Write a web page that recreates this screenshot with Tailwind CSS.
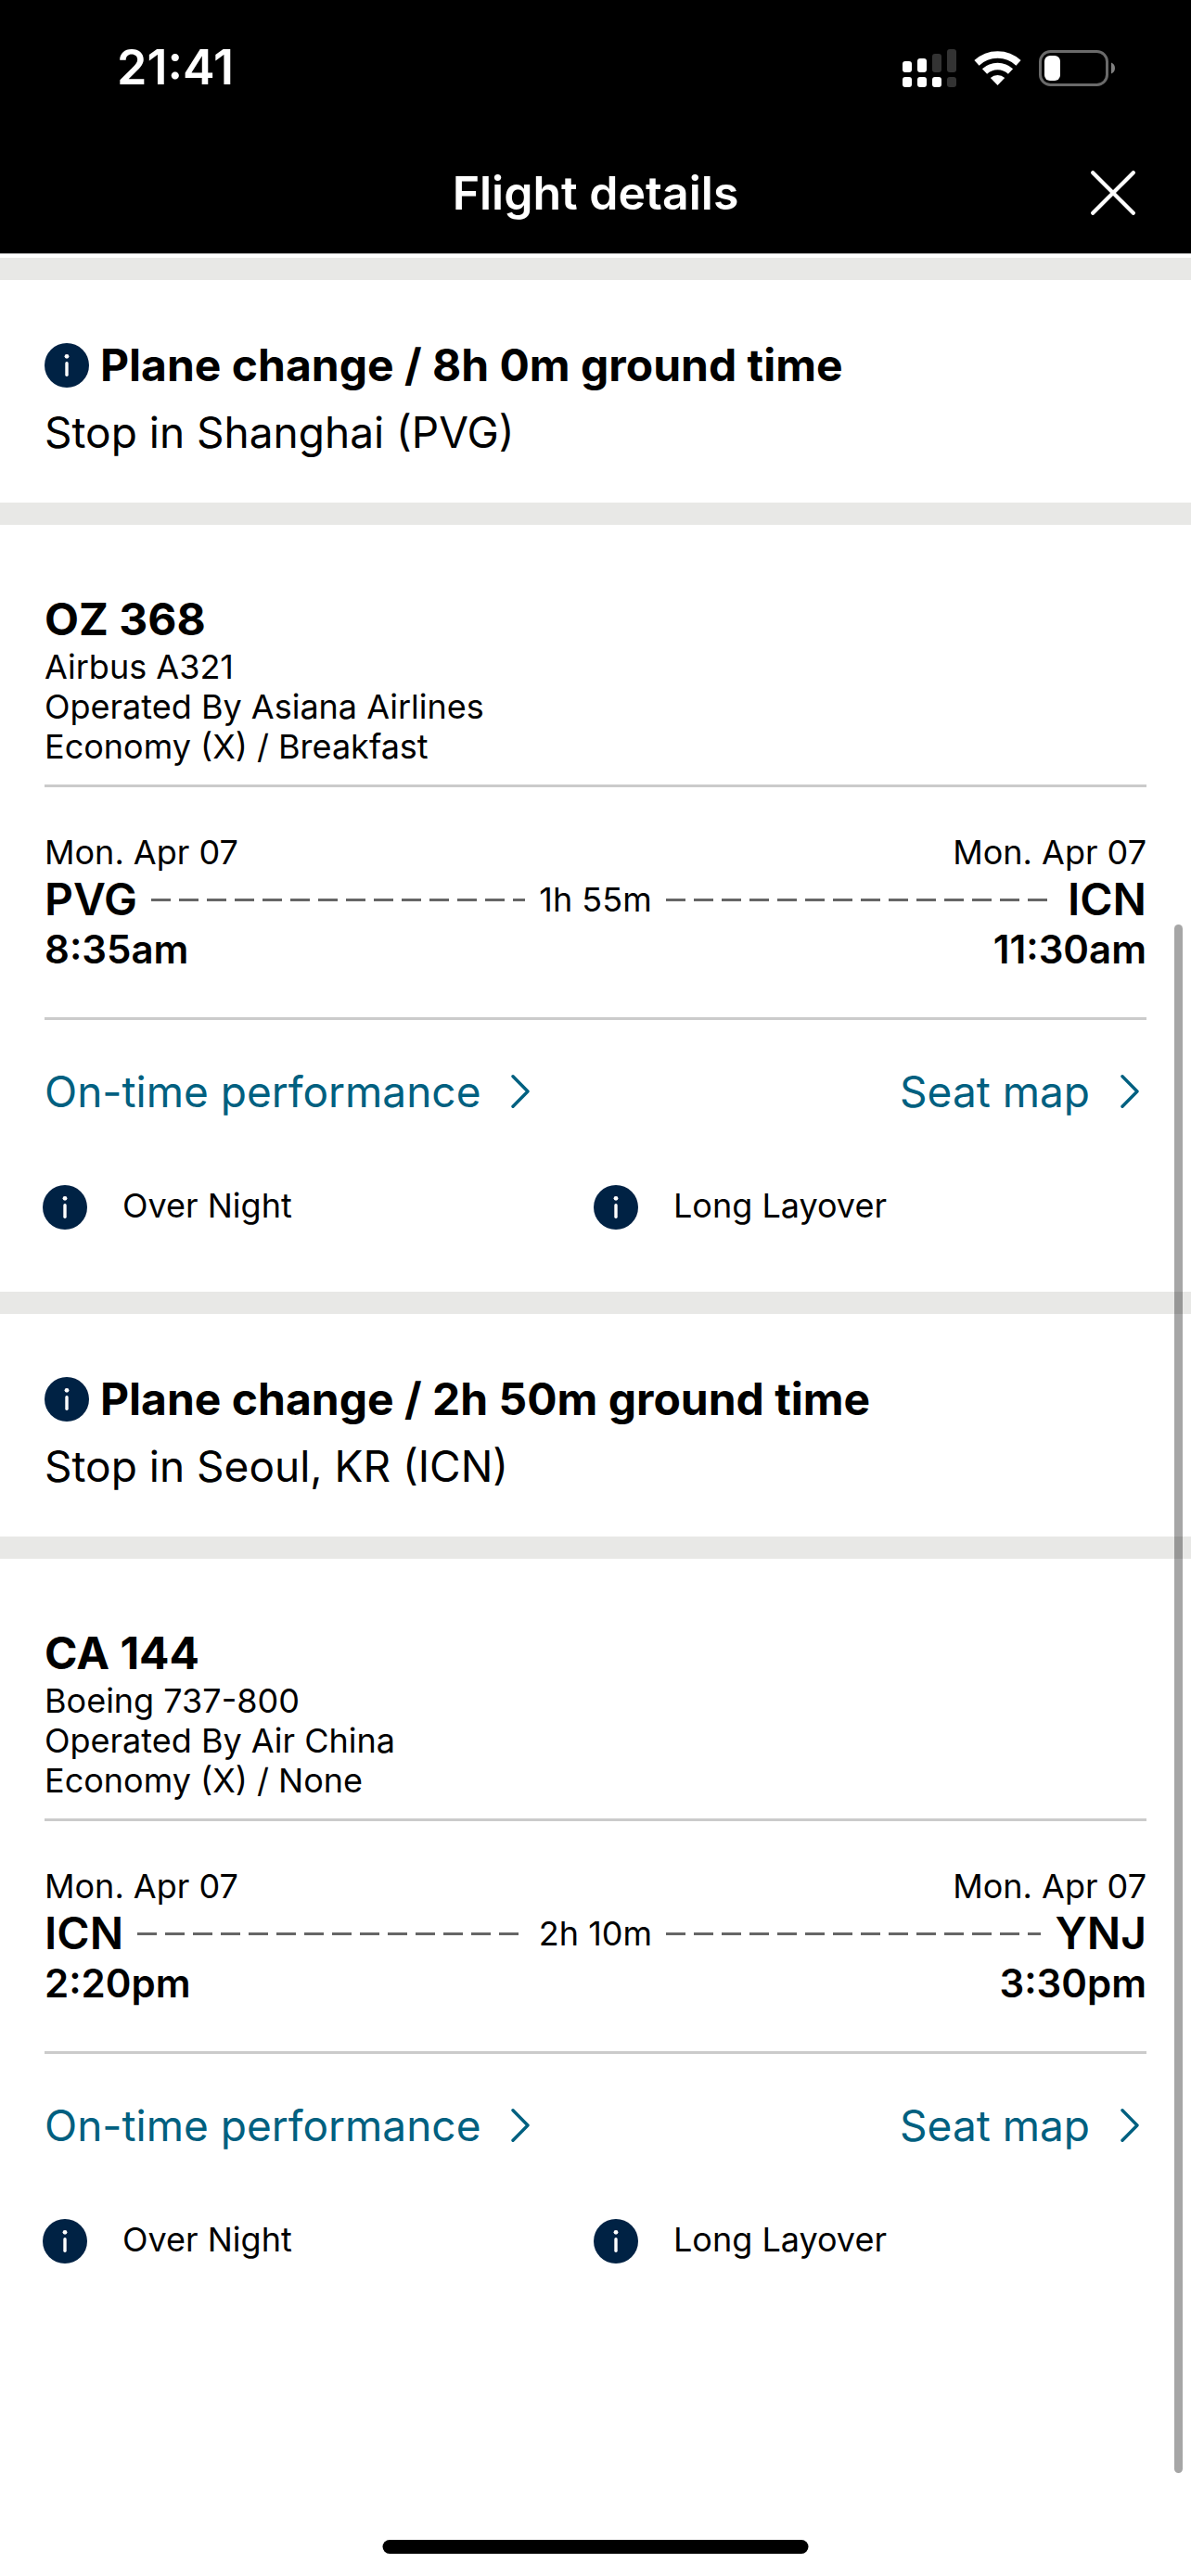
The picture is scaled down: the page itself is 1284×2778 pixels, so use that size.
<!DOCTYPE html>
<html lang="en">
<head>
<meta charset="utf-8">
<meta name="viewport" content="width=device-width, initial-scale=1">
<title>Flight details</title>
<script src="https://cdn.jsdelivr.net/npm/@tailwindcss/browser@4"></script>
</head>
<body class="relative min-h-screen bg-white font-['Inter',sans-serif] text-black">

<svg class="hidden" aria-hidden="true">
  <symbol id="info" viewBox="0 0 48 48">
    <circle cx="24" cy="24" r="24" fill="#002244"/>
    <circle cx="24" cy="14.3" r="2.4" fill="#fff"/>
    <path d="M24 21.7V34.3" stroke="#fff" stroke-width="3.4" stroke-linecap="round"/>
  </symbol>
  <symbol id="chevron" viewBox="0 0 28 36">
    <path d="M2 1.8 18 18 2 34.2" fill="none" stroke="currentColor" stroke-width="3.4" stroke-linecap="round" stroke-linejoin="round"/>
  </symbol>
</svg>

<header class="border-b border-[#a9a9a9] bg-black pb-[3px] text-white">
  <div class="flex h-[146px] items-center justify-between pr-[81px] pl-[126px]">
    <span class="text-[52px] font-semibold">21:41</span>
    <svg class="h-11 w-[230px]" viewBox="973 50 230 44" role="img" aria-label="Signal, Wi-Fi and battery">
      <g fill="#fff">
        <rect x="973" y="65" width="10" height="12" rx="3"/>
        <rect x="989" y="62" width="10" height="15" rx="3"/>
        <rect x="973" y="82" width="10" height="11" rx="3"/>
        <rect x="989" y="82" width="10" height="11" rx="3"/>
        <rect x="1005" y="82" width="10" height="11" rx="3"/>
      </g>
      <g fill="#333">
        <rect x="1005" y="57" width="10" height="20" rx="3"/>
        <rect x="1021" y="52" width="10" height="25" rx="3"/>
        <rect x="1021" y="82" width="10" height="11" rx="3"/>
      </g>
      <g fill="none" stroke="#fff" stroke-width="7.6">
        <path d="M1053 66.9A33 33 0 0 1 1098 66.9"/>
        <path d="M1061.5 76A20.5 20.5 0 0 1 1089.5 76"/>
      </g>
      <path d="M1075.5 91 1067.8 83A11.5 11.5 0 0 1 1083.2 83Z" fill="#fff"/>
      <rect x="1121.5" y="54.5" width="72" height="36" rx="11" fill="none" stroke="#6a6a6a" stroke-width="3"/>
      <rect x="1126" y="59" width="17" height="27" rx="6" fill="#fff"/>
      <path d="M1198 66.5C1200.5 67.5 1202 69.5 1202 72.5S1200.5 77.5 1198 78.5Z" fill="#808080"/>
    </svg>
  </div>
  <div class="grid h-[124px] grid-cols-[1fr_auto_1fr] items-center px-[60px]">
    <h1 class="col-start-2 text-[50px] leading-[60px] font-semibold">Flight details</h1>
    <button type="button" class="justify-self-end" aria-label="Close">
      <svg class="size-12" viewBox="0 0 48 48" fill="none" stroke="#fff" stroke-width="4.2" stroke-linecap="round"><path d="M2.2 2.2 45.8 45.8M45.8 2.2 2.2 45.8"/></svg>
    </button>
  </div>
</header>

<main class="pt-1">
  <section class="border-t-24 border-[#e8e8e6] px-12 pt-[60px] pb-9">
    <h2 class="flex items-center gap-3 text-[48px] leading-[64px] font-bold"><svg class="size-12"><use href="#info"/></svg>Plane change / 8h 0m ground time</h2>
    <p class="text-[46px] leading-[80px]">Stop in Shanghai (PVG)</p>
  </section>

  <article class="border-t-24 border-[#e8e8e6] pt-[72px] pb-[67px]">
    <div class="mx-12 border-b-3 border-[#cbcbcb] pb-[19px] text-[36px] leading-[43px]">
      <h3 class="text-[48px] leading-[60px] font-bold">OZ 368</h3>
      <p>Airbus A321</p>
      <p>Operated By Asiana Airlines</p>
      <p>Economy (X) / Breakfast</p>
    </div>
    <div class="mx-12 border-b-3 border-[#cbcbcb] pt-[49px] pb-12">
      <div class="flex justify-between text-[36px] leading-[43px]"><span>Mon. Apr 07</span><span>Mon. Apr 07</span></div>
      <div class="grid grid-cols-[1fr_auto_1fr] items-center gap-[15px] text-[48px] leading-[58px] font-semibold">
        <div class="flex items-center gap-[15px]"><span>PVG</span><span class="h-[3px] flex-1 bg-[repeating-linear-gradient(90deg,#666_0_21px,transparent_21px_30px)]"></span></div>
        <span class="text-[36px] leading-[58px] font-normal">1h 55m</span>
        <div class="flex items-center gap-[15px]"><span class="h-[3px] flex-1 bg-[repeating-linear-gradient(90deg,#666_0_21px,transparent_21px_30px)]"></span><span>ICN</span></div>
      </div>
      <div class="flex justify-between text-[42px] leading-[50px] font-semibold"><span>8:35am</span><span>11:30am</span></div>
    </div>
    <div class="mx-12 flex justify-between pt-[49px] text-[46px] leading-[56px] text-[#006080]">
      <a href="#" class="flex items-center gap-[33px]">On-time performance<svg class="h-9 w-7"><use href="#chevron"/></svg></a>
      <a href="#" class="flex items-center gap-[33px]">Seat map<svg class="h-9 w-7"><use href="#chevron"/></svg></a>
    </div>
    <ul class="grid grid-cols-2 pt-[73px] pr-[50px] pl-[46px] text-[36px] leading-[45px]">
      <li class="flex gap-[38px]"><svg class="size-12"><use href="#info"/></svg>Over Night</li>
      <li class="flex gap-[38px]"><svg class="size-12"><use href="#info"/></svg>Long Layover</li>
    </ul>
  </article>

  <section class="border-t-24 border-[#e8e8e6] px-12 pt-[60px] pb-9">
    <h2 class="flex items-center gap-3 text-[48px] leading-[64px] font-bold"><svg class="size-12"><use href="#info"/></svg>Plane change / 2h 50m ground time</h2>
    <p class="text-[46px] leading-[80px]">Stop in Seoul, KR (ICN)</p>
  </section>

  <article class="border-t-24 border-[#e8e8e6] pt-[72px] pb-[67px]">
    <div class="mx-12 border-b-3 border-[#cbcbcb] pb-[19px] text-[36px] leading-[43px]">
      <h3 class="text-[48px] leading-[60px] font-bold">CA 144</h3>
      <p>Boeing 737-800</p>
      <p>Operated By Air China</p>
      <p>Economy (X) / None</p>
    </div>
    <div class="mx-12 border-b-3 border-[#cbcbcb] pt-[49px] pb-12">
      <div class="flex justify-between text-[36px] leading-[43px]"><span>Mon. Apr 07</span><span>Mon. Apr 07</span></div>
      <div class="grid grid-cols-[1fr_auto_1fr] items-center gap-[15px] text-[48px] leading-[58px] font-semibold">
        <div class="flex items-center gap-[15px]"><span>ICN</span><span class="h-[3px] flex-1 bg-[repeating-linear-gradient(90deg,#666_0_21px,transparent_21px_30px)]"></span></div>
        <span class="text-[36px] leading-[58px] font-normal">2h 10m</span>
        <div class="flex items-center gap-[15px]"><span class="h-[3px] flex-1 bg-[repeating-linear-gradient(90deg,#666_0_21px,transparent_21px_30px)]"></span><span>YNJ</span></div>
      </div>
      <div class="flex justify-between text-[42px] leading-[50px] font-semibold"><span>2:20pm</span><span>3:30pm</span></div>
    </div>
    <div class="mx-12 flex justify-between pt-[49px] text-[46px] leading-[56px] text-[#006080]">
      <a href="#" class="flex items-center gap-[33px]">On-time performance<svg class="h-9 w-7"><use href="#chevron"/></svg></a>
      <a href="#" class="flex items-center gap-[33px]">Seat map<svg class="h-9 w-7"><use href="#chevron"/></svg></a>
    </div>
    <ul class="grid grid-cols-2 pt-[73px] pr-[50px] pl-[46px] text-[36px] leading-[45px]">
      <li class="flex gap-[38px]"><svg class="size-12"><use href="#info"/></svg>Over Night</li>
      <li class="flex gap-[38px]"><svg class="size-12"><use href="#info"/></svg>Long Layover</li>
    </ul>
  </article>
</main>

<!-- Scroll indicator and home indicator float over the page -->
<div class="absolute top-[997px] right-[9px] bottom-[111px] w-[9px] rounded-full bg-black/35"></div>
<div class="absolute bottom-6 left-1/2 h-[15px] w-[459px] -translate-x-1/2 rounded-full bg-black"></div>
</body>
</html>
